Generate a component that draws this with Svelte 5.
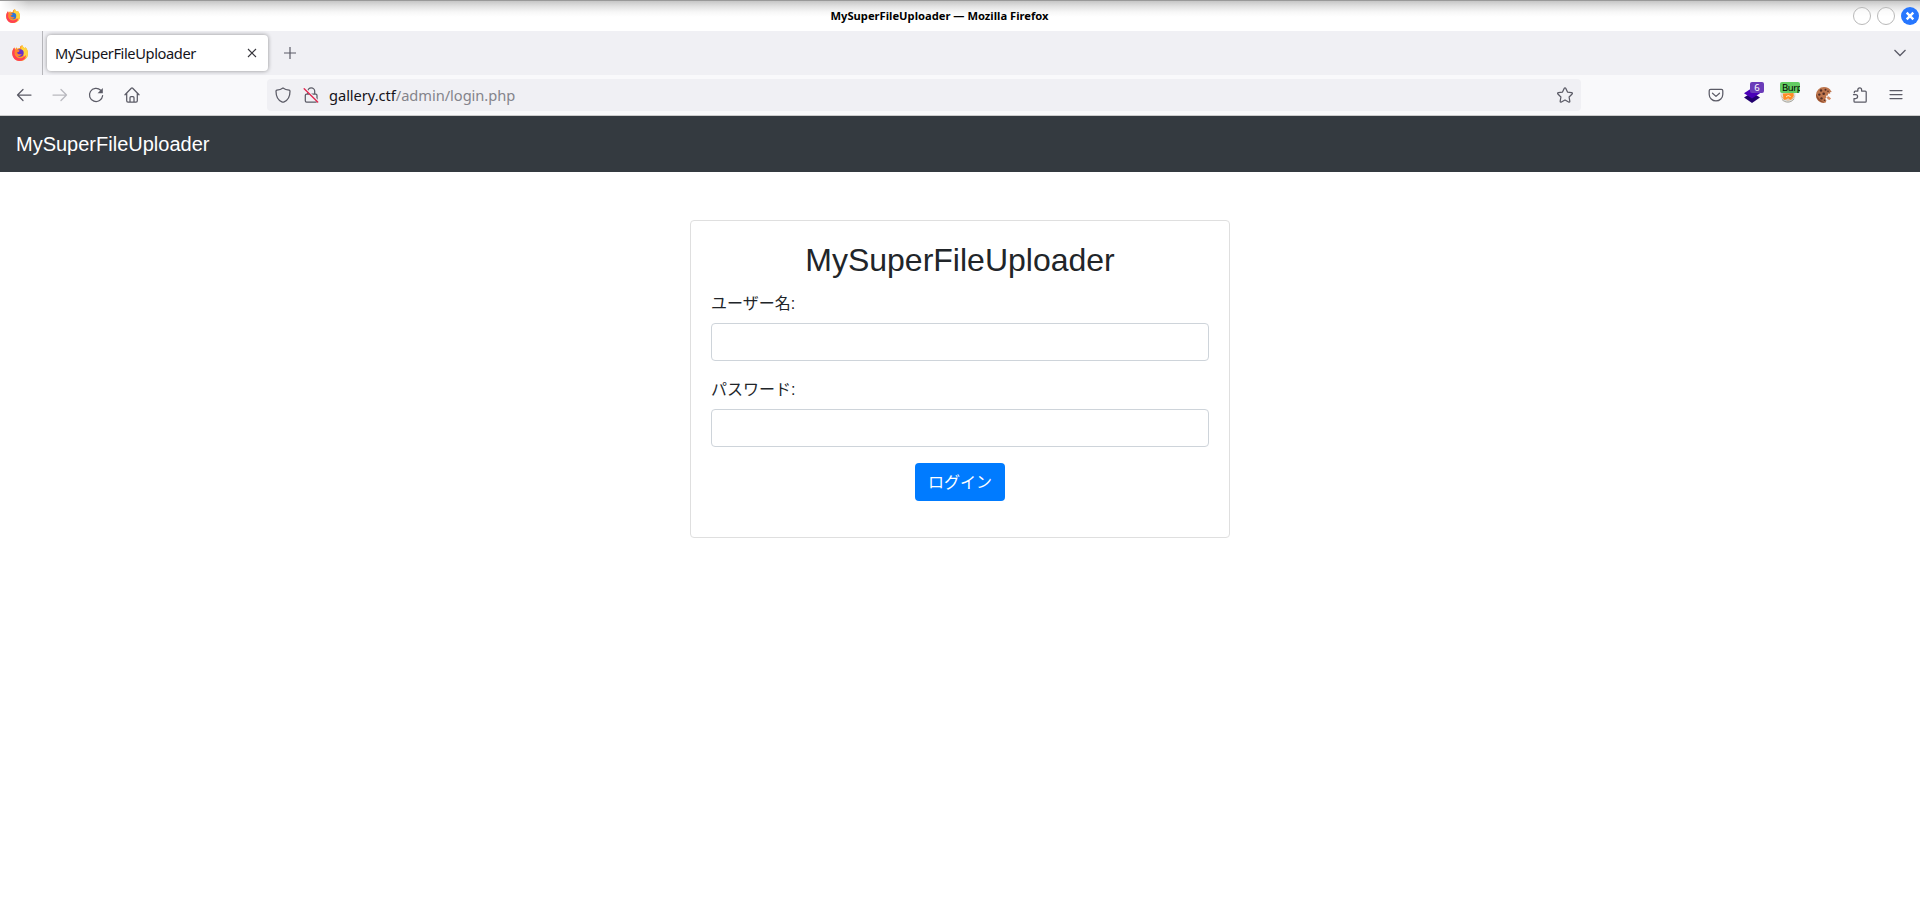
<script>
  const title = 'MySuperFileUploader';
  let username = $state('');
  let password = $state('');
</script>

{#snippet firefox(size, core)}
  <svg width={size} height={size} viewBox="0 0 16 16">
    <path d="M8 1.500 10.300 0c.1 1.700 1.200 2.200 2.500 3.200l.7-.9c1.800 2 2.500 4 2.500 6A7.900 7.700 0 0 1 .2 8.600C.1 6.500.8 4.400 2.300 2.600l.6 1.600 2-1.900.3 1.500c1-.6 2-.8 2.800-.7z" fill="#ff9a2b" />
    <path d="M10.300 0c.1 1.700 1.200 2.200 2.500 3.200l.7-.9c1.800 2 2.500 4 2.500 6 0 2-.8 4-2.200 5.300L10 8C9 5 8.500 2 10.300 0z" fill="#ffd43c" />
    <path d="M.2 8.500C.1 6.500.8 4.400 2.300 2.600l.6 1.600-.2 5c1 3 4 5 8 3.500 1.600-.6 2.600-1.500 3.400-2.600-.3 3.600-3.200 5.800-6.400 5.800C3.600 15.900.4 13 .2 8.500z" fill="#ff3f55" />
    <circle cx="8" cy="8" r="3.700" fill={core} />
    <path d="M3 5.500c1.500-1.200 3.500-.9 4.800.2L6.600 7 5 7.400c.5 1.900 2.500 2.400 4.800 1.600-.8 1.600-2.400 2.600-4.400 2.100C3.300 10.500 2.200 8 3 5.500z" fill="#ff842e" />
  </svg>
{/snippet}

<div class="window">
  <header class="titlebar">
    <span class="appicon">{@render firefox(14, '#3076d6')}</span>
    <span class="wtitle">{title} — Mozilla Firefox</span>
    <span class="controls">
      <i></i><i></i>
      <svg width="18" height="18" viewBox="0 0 18 18"><circle cx="9" cy="9" r="9" fill="#2777ff" /><path d="m5.700 5.700 6.600 6.600m0-6.600-6.600 6.600" stroke="#fff" stroke-width="2.400" /></svg>
    </span>
  </header>

  <div class="tabs">
    <span class="pinned">{@render firefox(16, '#6731c8')}</span>
    <div class="tab">
      <span>{title}</span>
      <svg width="10" height="10" viewBox="0 0 10 10"><path d="m1 1 8 8m0-8-8 8" stroke="#38373d" stroke-width="1.100" /></svg>
    </div>
    <svg class="plus" width="12" height="12" viewBox="0 0 12 12"><path d="M6 0v12M0 6h12" stroke="#5b5b66" stroke-width="1.200" /></svg>
    <svg class="chev" width="12" height="8" viewBox="0 0 12 8"><path d="m.5 1 5.500 5.500L11.500 1" fill="none" stroke="#5b5b66" stroke-width="1.300" /></svg>
  </div>

  <div class="toolbar">
    <div class="group">
      <span class="tool"><svg class="ic" viewBox="0 0 16 16"><path d="M15 8H1.500M7 2.500 1.500 8 7 13.500" /></svg></span>
      <span class="tool dim"><svg class="ic" viewBox="0 0 16 16"><path d="M1 8h13.500M9 2.500 14.500 8 9 13.500" /></svg></span>
      <span class="tool"><svg class="ic" viewBox="0 0 16 16"><path d="M12.700 3.300A6.600 6.600 0 1 0 14.600 8.700" /><path d="M14.800 1v5.200H9.600z" fill="#5b5b66" stroke="none" /></svg></span>
      <span class="tool"><svg class="ic home" viewBox="0 0 16 16"><path d="M1 7.800 7.300 1.300a1 1 0 0 1 1.400 0L15 7.800M2.700 6.500v7.300c0 .8.500 1.300 1.300 1.300h8c.8 0 1.300-.5 1.300-1.300V6.500M6 15v-4.200C6 10.100 6.300 9.700 7 9.700h2c.7 0 1 .4 1 1.100V15" /></svg></span>
    </div>
    <div class="urlbar">
      <svg class="ic" viewBox="0 0 16 16"><path d="M8 .9c2 1.500 3.800 2 6.200 2.300.6.100.8.500.8 1 0 5.200-2.200 9-5.900 10.700a2.500 2.500 0 0 1-2.200 0C3.200 13.200 1 9.400 1 4.200c0-.5.200-.9.800-1C4.200 2.900 6 2.400 8 .9z" /></svg>
      <svg class="ic lock" viewBox="0 0 16 16"><path d="M4.700 7V4.300a3.500 3.500 0 0 1 7 0V7M3.500 7.200h9.300c.8 0 1.200.5 1.200 1.200v5.300c0 .8-.5 1.300-1.300 1.300H3.600c-.8 0-1.300-.5-1.300-1.300V8.400c0-.7.500-1.200 1.200-1.200z" /><path d="M2.200 1.700 15.200 14.500" stroke="#f0f0f4" stroke-width="2" /><path d="M1.200 1.700 14.700 15" stroke="#e22850" stroke-width="1.400" /></svg>
      <span class="url"><b>gallery.ctf</b>/admin/login.php</span>
      <svg class="ic star" viewBox="0 0 16 16"><path d="M7.300 1.200c.3-.6 1.100-.6 1.400 0l1.800 3.900 4.200.6c.7.100.9.800.4 1.300l-3 3 .7 4.200c.1.700-.5 1.200-1.200.8L8 13l-3.600 2c-.7.400-1.300-.1-1.200-.8l.7-4.200-3-3c-.5-.5-.3-1.200.4-1.300l4.200-.6z" /></svg>
    </div>
    <div class="group">
      <span class="tool"><svg class="ic" viewBox="0 0 16 16"><path d="M2.600 2.400h10.800c.9 0 1.400.5 1.400 1.400v3.400a6.800 6.800 0 0 1-13.600 0V3.800c0-.9.500-1.400 1.400-1.400zM4.500 6.200 8 9.400l3.500-3.200" /></svg></span>
      <span class="tool">
        <svg width="16" height="16" viewBox="0 0 16 16"><path d="m8 5.500 8 5.100L8 16l-8-5.400z" fill="#22006e" /><path d="m8 1 8 5.200-8 5.300-8-5.300z" fill="#4a00b8" /></svg>
        <em class="count">6</em>
      </span>
      <span class="tool">
        <svg width="16" height="16" viewBox="0 0 16 16"><circle cx="8" cy="8" r="7.600" fill="#dce1df" /><path d="M.8 7.500a7.300 7.300 0 0 0 14.400 0c-1 2.600-4 5.200-7.400 5.200S2.300 10.500.8 7.500z" fill="#e7a56b" /><path d="m2.800 6.500 10.700-.5.300 3-3 3.800-2.600-1.400-4.300 1.600-.5-2z" fill="#ff8d25" /><path d="m6 10 2-1.500 2.600 1" stroke="#fff0ba" fill="none" /><path d="M2 12.500c3 3.500 9 3.600 12-.6" stroke="#a9a69d" fill="none" /></svg>
        <em class="burp">Burp</em>
      </span>
      <span class="tool"><svg width="16" height="16" viewBox="0 0 16 16"><path d="M8 0c3 0 6 1.300 7 4l.8 1-1.800.3.200 1.500-2-.2-.4 2-1.900.2.600 2-1.400 1 1.300 1.400-.6 2.200C5 17.300 0 13.300 0 8.200A8 8 0 0 1 8 0z" fill="#bd754d" /><path d="M8.500 15.600A7.800 7.800 0 0 1 .2 7c2 4 4.500 6.600 8.300 8.600z" fill="#94502f" /><g fill="#512d26"><circle cx="5" cy="3.500" r="1.200" /><circle cx="9.500" cy="2.700" r="1" /><circle cx="3.300" cy="7.600" r="1.200" /><circle cx="7.700" cy="6.800" r="1.300" /><circle cx="5.500" cy="11.400" r="1.200" /><circle cx="12" cy="4.300" r=".8" /><circle cx="8.500" cy="13.300" r=".8" /></g><path d="m11 10 1.500-.8 2.600 2.200-1.700 1.500-2-.8z" fill="#d58b63" /></svg></span>
      <span class="tool"><svg class="ic" viewBox="0 0 16 16"><path d="M2.300 5.700V5c0-.6.400-1 1-1h2.500V2.800a1.900 1.900 0 0 1 3.800 0V4h3.600c.6 0 1 .4 1 1v9.300c0 .5-.4.900-1 .9H3c-.6 0-1-.4-1-1v-2.700h1.700a1.900 1.900 0 0 0 0-3.800H1.500" /></svg></span>
      <span class="tool"><svg class="ic" viewBox="0 0 16 16"><path d="M2 3.500h12M2 7.500h12M2 11.500h12" /></svg></span>
    </div>
  </div>

  <nav>{title}</nav>

  <main>
    <form class="card">
      <h2>{title}</h2>
      <label for="user">ユーザー名:</label>
      <input id="user" type="text" bind:value={username} />
      <label for="pass">パスワード:</label>
      <input id="pass" type="password" bind:value={password} />
      <button type="button">ログイン</button>
    </form>
  </main>
</div>

<style>
  :global(body) { margin: 0; background: #fff; }
  * { box-sizing: border-box; }
  svg { display: block; flex: none; }
  .window { height: 919px; overflow: hidden; font-family: "Noto Sans", sans-serif; color: #15141a; }
  .titlebar {
    height: 31px; display: grid; grid-template-columns: 1fr auto 1fr; align-items: center;
    padding: 0 1px 0 6px; border-top: 1px solid #999;
    background: linear-gradient(90deg, #fff 0, #fff0 28px), linear-gradient(#c6c6c6 0, #e0e0e0 5px, #f7f7f7 11px, #fff 16px);
  }
  .wtitle { padding-right: 46px; font-size: 11.2px; font-weight: 700; line-height: 16px; color: #000; }
  .controls { display: flex; justify-content: flex-end; gap: 6px; }
  .controls i { width: 18px; height: 18px; border: 1px solid #b9b9b9; border-radius: 50%; background: #ffffff90; }
  .tabs { height: 44px; display: flex; align-items: center; background: #f0f0f4; }
  .pinned { width: 43px; height: 44px; padding: 14px 0 0 12px; border-right: 1px solid #b6b6ba; }
  .tab {
    width: 221px; height: 36px; margin-left: 4px; padding: 0 11px 0 8px; display: flex; align-items: center;
    justify-content: space-between; border-radius: 4px; background: #fff; box-shadow: 0 0 4px #0006;
    font-size: 14.67px; letter-spacing: -.4px;
  }
  .plus { margin-left: 16px; }
  .chev { margin: 0 14px 0 auto; }
  .toolbar {
    height: 41px; display: flex; align-items: center; justify-content: space-between;
    padding: 0 6px; background: #f9f9fb; border-bottom: 1px solid #ccc;
  }
  .group { display: flex; }
  .tool { position: relative; width: 36px; height: 32px; display: flex; align-items: center; justify-content: center; }
  .dim { opacity: .4; }
  .ic { width: 16px; height: 16px; fill: none; stroke: #5b5b66; stroke-width: 1.250; stroke-linecap: round; stroke-linejoin: round; }
  .home { margin-right: 1px; }
  .urlbar { width: 1314px; height: 32px; margin-left: auto; margin-right: 117px; padding: 0 8px; display: flex; align-items: center; border-radius: 4px; background: #f0f0f4; }
  .lock { margin: 0 10px 0 12px; }
  .star { margin-left: auto; }
  .url { font-size: 14.67px; line-height: 20px; letter-spacing: -.05px; color: #84848b; }
  .url b { font-weight: 400; color: #15141a; }
  em { position: absolute; font-style: normal; border-radius: 2px; font-size: 9.500px; line-height: 11px; height: 11px; }
  .count { left: 16px; top: 3px; width: 14px; background: #6b3cb9; color: #fff; text-align: center; }
  .burp { left: 10px; top: 3px; width: 20px; padding-left: 2px; overflow-x: clip; overflow-y: visible; letter-spacing: -.4px; background: #63cb62; color: #000; }
  nav { height: 56px; padding-left: 16px; background: #343a40; color: #fff; font: 20px/56px "Liberation Sans", Arial, sans-serif; }
  main { padding-top: 48px; display: flex; justify-content: center; }
  .card {
    width: 540px; height: 318px; padding: 20px; display: flex; flex-direction: column;
    border: 1px solid #dfdfdf; border-radius: 4px; color: #212529;
    font: 16px/24px "Liberation Sans", "Noto Sans CJK JP", sans-serif;
  }
  h2 { margin: 0 0 12px; font-size: 32px; font-weight: 500; line-height: 38px; text-align: center; }
  label { height: 24px; margin-bottom: 8px; padding-top: 1px; }
  input { height: 38px; width: 100%; margin: 0 0 16px; padding: 6px 12px; border: 1px solid #ced4da; border-radius: 4px; background: #fff; font: inherit; }
  button { align-self: center; width: 90px; height: 38px; padding: 2px 0 0; border: 0; border-radius: 4px; background: #007bff; color: #fff; font: inherit; }
</style>
